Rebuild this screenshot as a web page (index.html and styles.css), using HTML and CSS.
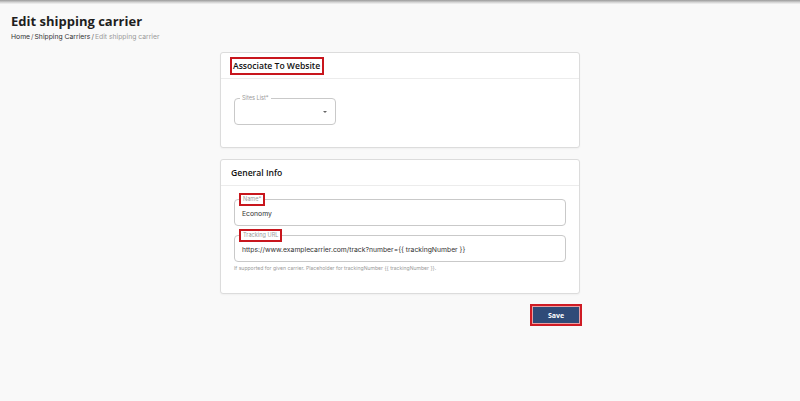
FILE: index.html
```html
<!DOCTYPE html>
<html lang="en">
<head>
    <meta charset="UTF-8">
    <meta name="viewport" content="width=device-width, initial-scale=1.0">
    <title>Edit shipping carrier</title>
    <link rel="stylesheet" href="styles.css">
</head>
<body>
    <div class="topbar"></div>

    <header class="page-head">
        <h1>Edit shipping carrier</h1>
        <div class="crumbs">
            <a href="#">Home</a><span class="sep">/</span><a href="#">Shipping Carriers</a><span class="sep">/</span><span class="current">Edit shipping carrier</span>
        </div>
    </header>

    <main class="content">
        <section class="card">
            <div class="card-head">
                <h2 class="marked">Associate To Website</h2>
            </div>
            <div class="card-body site-body">
                <div class="field select">
                    <span class="field-label">Sites List*</span>
                    <span class="caret"></span>
                </div>
            </div>
        </section>

        <section class="card">
            <div class="card-head">
                <h2>General Info</h2>
            </div>
            <div class="card-body info-body">
                <div class="field wide">
                    <span class="field-label marked">Name*</span>
                    <span class="value">Economy</span>
                </div>
                <div class="field wide">
                    <span class="field-label marked">Tracking URL</span>
                    <span class="value">https://www.examplecarrier.com/track?number={{ trackingNumber }}</span>
                </div>
                <p class="hint">If supported for given carrier. Placeholder for trackingNumber {{ trackingNumber }}.</p>
            </div>
        </section>

        <div class="actions">
            <div class="save-mark">
                <button class="save">Save</button>
            </div>
        </div>
    </main>
</body>
</html>
```

FILE: styles.css
```css
body{margin: 0; padding: 0; background-color: #f9f9f9; font-family: Inter, "Noto Sans", sans-serif; color: #333;}
a{color: #333; text-decoration: none;}

.topbar{height: 4px; background: linear-gradient(#9a9a9a, #d6d6d6 60%, #f3f3f3);}

.page-head{padding: 7px 11px 0;}
.page-head h1{
    margin: 0;
    font-family: "Open Sans", sans-serif;
    font-size: 13px;
    font-weight: 700;
    line-height: 20px;
    color: #1e1e1e;
}
.crumbs{font-size: 6.8px; line-height: 12px; margin-top: 0; color: #333;}
.crumbs .sep{color: #666; margin: 0 1px;}
.crumbs .current{color: #999;}

.content{
    width: 360px;
    margin: 9px auto 0;
    display: flex;
    flex-direction: column;
    gap: 11px;
}

.card{
    background-color: #fff;
    border: 1px solid #dcdcdc;
    border-radius: 3px;
    box-shadow: 0 1px 2px rgba(0, 0, 0, 0.04);
}
.card-head{
    height: 25px;
    border-bottom: 1px solid #ececec;
    padding: 0 10px;
    display: flex;
    align-items: center;
}
.card-head h2{
    margin: 0;
    font-family: "Open Sans", sans-serif;
    font-size: 8.6px;
    font-weight: 600;
    color: #111;
    line-height: 12px;
}

.marked{
    border: 2px solid #c8161d;
    padding: 0 2px;
}
.card-head h2.marked{padding: 1px 2px 1px 1px; margin-left: -1px;}

.card-body{padding: 0 13px;}
.site-body{padding-top: 19px; padding-bottom: 22px;}
.info-body{padding-top: 13px; padding-bottom: 21px;}

.field{
    position: relative;
    box-sizing: border-box;
    height: 27px;
    border: 1px solid #c9c9c9;
    border-radius: 4px;
    display: flex;
    align-items: center;
    padding: 0 7px;
    background-color: #fff;
}
.field.select{width: 102px;}
.field.wide + .field.wide{margin-top: 9px;}

.field-label{
    position: absolute;
    top: -4px;
    left: 5px;
    padding: 0 2px;
    background-color: #fff;
    font-size: 5.6px;
    line-height: 7px;
    color: #9a9a9a;
}
.field-label.marked{top: -7px; left: 4px; padding: 1px 2px;}

.value{font-size: 6.8px; color: #333; margin-top: 1px;}

.caret{
    position: absolute;
    right: 8px;
    top: 12px;
    width: 0;
    height: 0;
    border-left: 2.5px solid transparent;
    border-right: 2.5px solid transparent;
    border-top: 2.5px solid #666;
}

.hint{margin: 2px 0 0 0; font-size: 5.1px; color: #9a9a9a; line-height: 8px;}

.actions{display: flex; justify-content: flex-end; margin-top: -1px; margin-right: -2px;}
.save-mark{border: 2px solid #cf1b24; padding: 0;}
.save{
    display: block;
    width: 48px;
    height: 18px;
    border: 1px solid #e8a0a4;
    background-color: #2f4b78;
    color: #fff;
    font-family: "Open Sans", sans-serif;
    font-size: 7px;
    font-weight: 700;
    cursor: pointer;
}
```
